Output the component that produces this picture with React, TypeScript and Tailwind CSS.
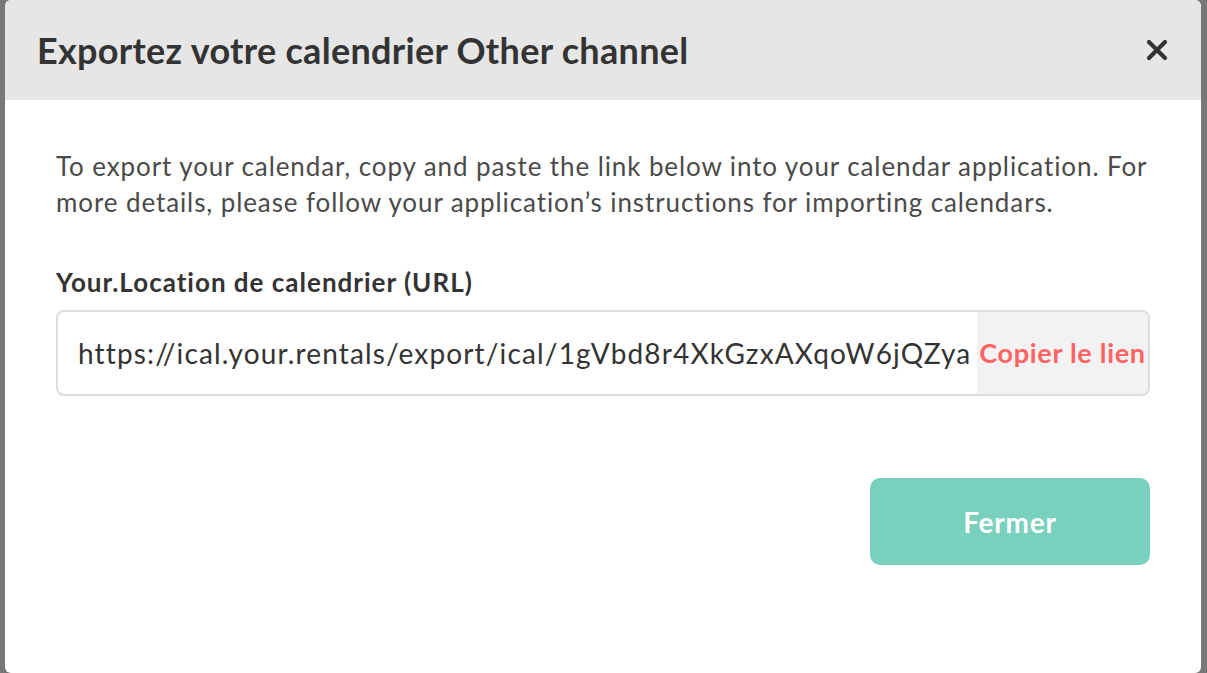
import React from "react";

const font = { fontFamily: "Lato, 'Open Sans', sans-serif" };

export default function App() {
  const url = "https://ical.your.rentals/export/ical/1gVbd8r4XkGzxAXqoW6jQZya";

  return (
    <div className="h-[673px] w-full overflow-hidden bg-[#777777] pl-[5px] pr-[6px]" style={font}>
      <div className="flex h-[673px] flex-col overflow-hidden rounded-[6px] bg-white">
        <div className="flex h-[100px] shrink-0 items-center justify-between bg-[#e6e6e6] pl-[32px] pr-[33px]">
          <h1 className="text-[36px] font-bold tracking-[0.3px] text-[#333333]">Exportez votre calendrier Other channel</h1>
          <button className="text-[#333333]" title="Fermer">
            <svg width="22" height="22" viewBox="0 0 22 22">
              <path d="M3 3 L19 19 M19 3 L3 19" stroke="currentColor" strokeWidth="4.2" strokeLinecap="round" />
            </svg>
          </button>
        </div>

        <div className="flex flex-col px-[51px] pt-[48px]">
          <p className="text-[26px] leading-[36px] tracking-[0.9px] text-[#4a4a4a]">
            To export your calendar, copy and paste the link below into your calendar application. For more details, please follow your application’s instructions for importing calendars.
          </p>

          <label className="mt-[44px] text-[26px] font-bold leading-[36px] tracking-[1px] text-[#333333]">Your.Location de calendrier (URL)</label>

          <div className="mt-[10px] flex h-[86px] overflow-hidden rounded-[8px] border-2 border-[#dddddd]">
            <div className="flex min-w-0 flex-1 items-center overflow-hidden pl-[20px]">
              <span className="whitespace-nowrap text-[28px] tracking-[1.15px] text-[#333333]">{url}</span>
            </div>
            <button className="flex w-[171px] shrink-0 items-center justify-center whitespace-nowrap bg-[#f2f2f2] text-[27px] font-bold tracking-[0.7px] text-[#ff6363]">
              Copier le lien
            </button>
          </div>

          <div className="mt-[82px] flex justify-end">
            <button className="h-[87px] w-[280px] rounded-[10px] bg-[#79d0bd] text-[28px] font-bold tracking-[0.8px] text-white">Fermer</button>
          </div>
        </div>
      </div>
    </div>
  );
}
